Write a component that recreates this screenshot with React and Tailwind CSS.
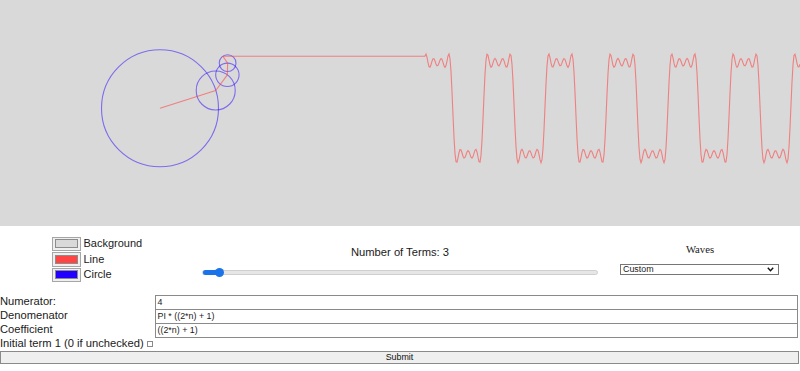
import React from 'react'

const CX = 160
const CY = 108.3
const R = 58.5
const TERMS = 4
const THETA = -0.31
const DT = 0.1022
const WAVE_X = 425

function buildScene() {
    const circles = []
    const arms = []
    let x = CX
    let y = CY
    for (let k = 0; k < TERMS; k++) {
        const n = 2 * k + 1
        const r = R / n
        const px = x
        const py = y
        circles.push({ cx: px, cy: py, r })
        x += r * Math.cos(n * THETA)
        y += r * Math.sin(n * THETA)
        arms.push({ x1: px, y1: py, x2: x, y2: y })
    }

    const pts = []
    for (let i = 0; i <= 800 - WAVE_X; i++) {
        const t = THETA - i * DT
        let v = 0
        for (let k = 0; k < TERMS; k++) {
            const n = 2 * k + 1
            v += (R / n) * Math.sin(n * t)
        }
        pts.push(`${WAVE_X + i},${(CY + v).toFixed(2)}`)
    }

    return { circles, arms, end: { x, y }, wave: pts }
}

function Swatch({ color, label }) {
    return (
        <div className="flex items-center h-[15.5px]">
            <div className="w-[29px] h-[14.5px] bg-[#efefef] border border-[#a6a6a6] flex items-center justify-center">
                <div className="w-[23px] h-[9px] border border-[#8c8c8c]" style={{ background: color }} />
            </div>
            <span className="ml-[2.5px] leading-none text-[11px]">{label}</span>
        </div>
    )
}

function Field({ label, value }) {
    return (
        <div className="grid grid-cols-[155px_643px] h-[14px]">
            <div className="flex items-center leading-none">{label}</div>
            <div className="border border-[#8a8a8a] -mb-px flex items-center px-[1.5px] text-[8.9px] leading-none bg-white">
                {value}
            </div>
        </div>
    )
}

export default function App() {
    const { circles, arms, end, wave } = buildScene()

    return (
        <div className="w-[800px] h-[371px] overflow-hidden bg-white text-[11.2px] text-[#1a1a1a] font-['Liberation_Sans',Arial,sans-serif]">
            <svg width="800" height="226" className="block">
                <rect x="0" y="0" width="800" height="226" fill="#d9d9d9" />
                {circles.map((c, i) => (
                    <circle key={i} cx={c.cx} cy={c.cy} r={c.r} fill="none" stroke="#2200ff" strokeOpacity="0.5" strokeWidth="1.1" />
                ))}
                {arms.map((a, i) => (
                    <line key={i} x1={a.x1} y1={a.y1} x2={a.x2} y2={a.y2} stroke="#ff4444" strokeOpacity="0.6" strokeWidth="1.1" />
                ))}
                <line x1={end.x} y1={end.y} x2={WAVE_X} y2={Number(wave[0].split(',')[1])} stroke="#ff4444" strokeOpacity="0.6" strokeWidth="1.1" />
                <polyline points={wave.join(' ')} fill="none" stroke="#ff4444" strokeOpacity="0.6" strokeWidth="1.1" />
            </svg>

            <div className="grid grid-cols-[200px_400px_200px] h-[69px]">
                <div className="pt-[10px] pl-[52px] flex flex-col">
                    <Swatch color="#d9d9d9" label="Background" />
                    <Swatch color="#ff4444" label="Line" />
                    <Swatch color="#2200ff" label="Circle" />
                </div>

                <div className="flex flex-col items-center pt-[21px]">
                    <div className="leading-none h-[12px]">Number of Terms: 3</div>
                    <div className="relative w-[396px] h-[5px] mt-[11px] rounded-full bg-[#e6e6e6] border border-[#cfcfcf]">
                        <div className="absolute left-0 top-[-1px] h-[5px] w-[17px] rounded-full bg-[#1a73e8]" />
                        <div className="absolute left-[12px] top-[-3.5px] w-[9px] h-[9px] rounded-full bg-[#1a73e8]" />
                    </div>
                </div>

                <div className="flex flex-col items-center pt-[18px]">
                    <div className="font-['Liberation_Serif','Times_New_Roman',serif] leading-none h-[12px] text-[10.7px]">Waves</div>
                    <div className="mt-[8px] ml-[-1px] w-[159px] h-[11px] border border-[#767676] bg-white flex items-center justify-between pl-[2px] pr-[4px] text-[8.9px] leading-none">
                        <span>Custom</span>
                        <svg width="7" height="5" viewBox="0 0 7 5">
                            <polyline points="0.8,0.8 3.5,3.8 6.2,0.8" fill="none" stroke="#111" strokeWidth="1.4" />
                        </svg>
                    </div>
                </div>
            </div>

            <Field label="Numerator:" value="4" />
            <Field label="Denomenator" value="PI * ((2*n) + 1)" />
            <Field label="Coefficient" value="((2*n) + 1)" />

            <div className="flex items-center h-[14px] leading-none">
                <span>Initial term 1 (0 if unchecked)</span>
                <span className="ml-[3px] w-[6.5px] h-[6.5px] border border-[#8a8a8a] bg-white" />
            </div>

            <button className="block w-[799px] h-[13px] bg-[#efefef] border border-[#8a8a8a] text-[8.9px] leading-none text-[#111]">
                Submit
            </button>
        </div>
    )
}
